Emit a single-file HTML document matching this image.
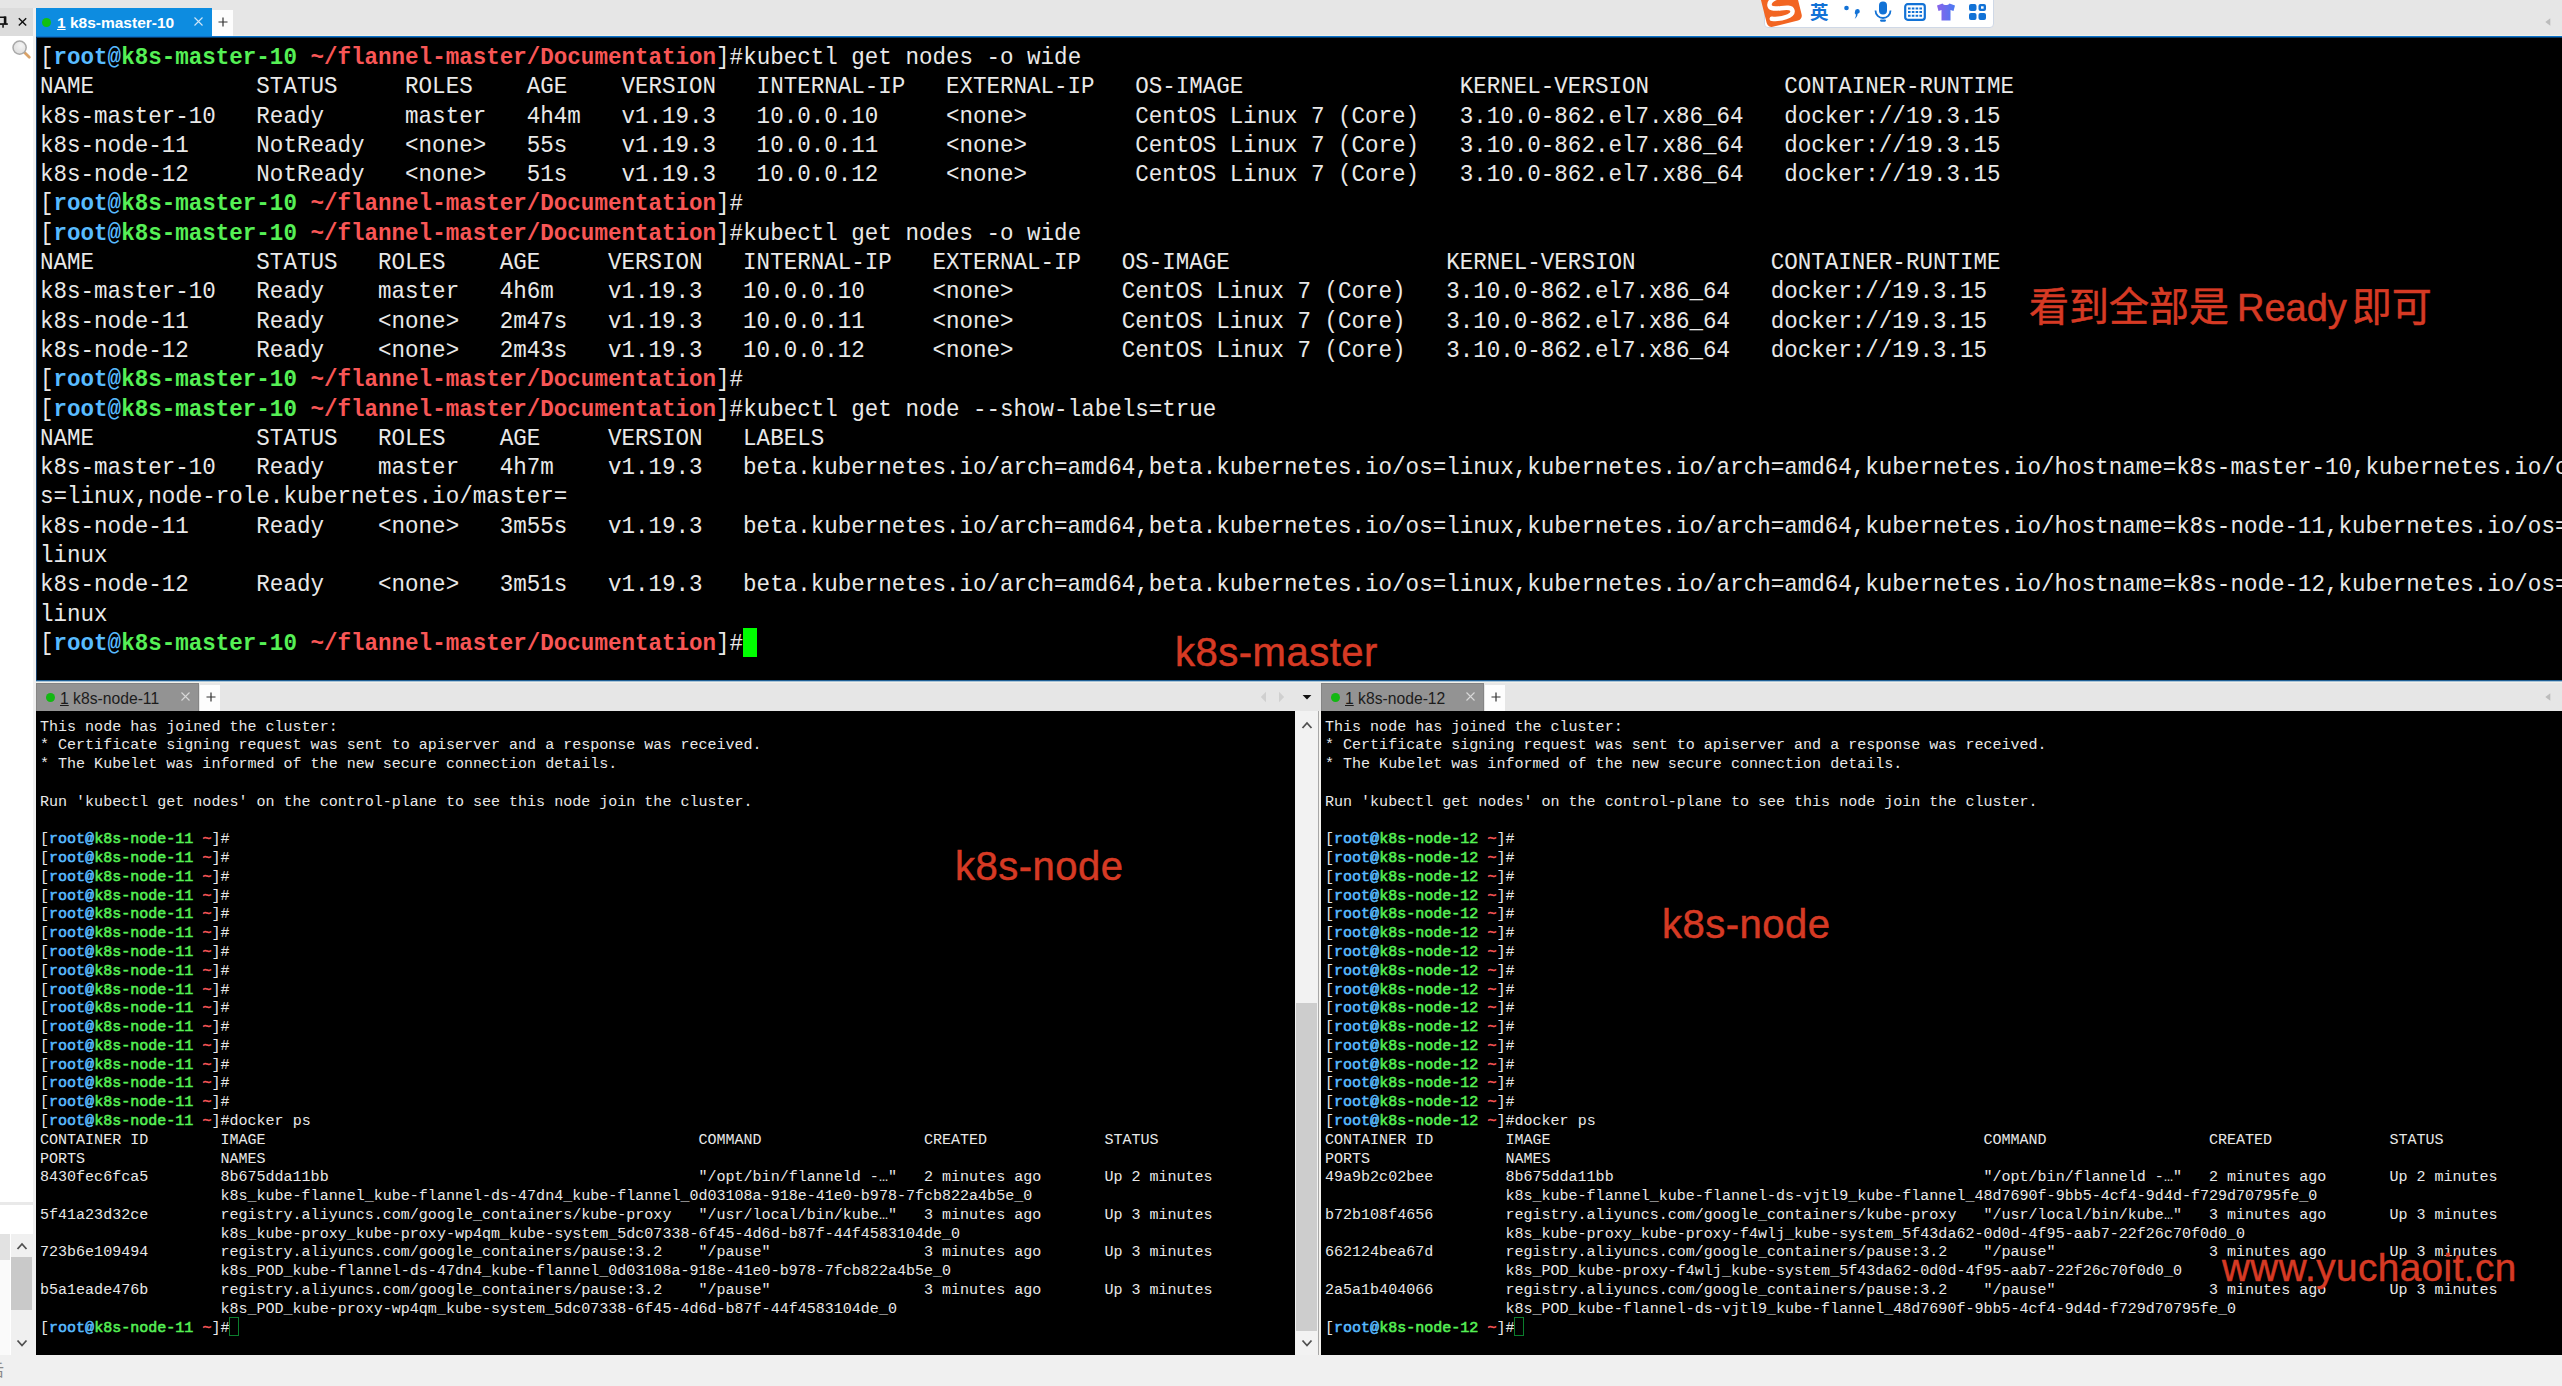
<!DOCTYPE html>
<html lang="zh"><head><meta charset="utf-8"><title>k8s terminals</title>
<style>
*{margin:0;padding:0;box-sizing:border-box}
html,body{width:2562px;height:1386px;overflow:hidden;background:#e6e6e6;font-family:"Liberation Sans",sans-serif}
#root{position:relative;width:2562px;height:1386px;overflow:hidden;background:#e6e6e6}
.abs{position:absolute}
.term{position:absolute;background:#000;overflow:hidden}
.ln{position:absolute;white-space:pre;color:#e9e9e9;font-family:"Liberation Mono",monospace}
.m{font-size:22.548px;line-height:30px;height:30px;transform:scaleY(1.065);transform-origin:0 50%}
.n{font-size:15.041px;line-height:20px;height:20px}
.w{color:#e9e9e9}
b{font-weight:bold}
.n b{font-weight:normal;-webkit-text-stroke:0.55px}
.b{color:#58bbff}
.g{color:#55f055}
.r{color:#f85656}
.cur{display:inline-block;width:13.531px;height:28px;background:#00ff00;vertical-align:top;margin-top:1px}
.hcur{display:inline-block;width:9.026px;height:18px;border:1px solid #0a8a0a;vertical-align:top;margin-top:1px}
.ann{position:absolute;color:#d63a24;-webkit-text-stroke:0.5px #d63a24;letter-spacing:0.5px;white-space:nowrap;font-family:"Liberation Sans","Noto Sans CJK SC",sans-serif;line-height:1}
.tabtxt{position:absolute;white-space:nowrap;font-family:"Liberation Sans",sans-serif}
</style></head>
<body><div id="root">
<div class="abs" style="left:0;top:0;width:2562px;height:36px;background:#e6e6e6"></div>
<div class="abs" style="left:0;top:8px;width:33px;height:28px;background:#dcdcdc"></div>
<div class="abs" style="left:0;top:36px;width:33px;height:1319px;background:#fff"></div>
<div class="abs" style="left:33px;top:8px;width:3px;height:1347px;background:#f0f0f0"></div>
<div class="abs" style="left:0;top:1202px;width:33px;height:3px;background:#e9e9e9"></div>
<div class="abs" style="left:0;top:1234px;width:10px;height:26px;background:#e2e2e2"></div>
<div class="abs" style="left:0;top:1260px;width:10px;height:95px;background:#fafafa"></div>
<div class="abs" style="left:11px;top:1234px;width:22px;height:121px;background:#f0f0f0"></div>
<div class="abs" style="left:11px;top:1257px;width:21px;height:53px;background:#c9c9c9"></div>
<svg class="abs" style="left:15px;top:1240px" width="14" height="12" viewBox="0 0 14 12"><path d="M2.5 9 L7 4 L11.5 9" fill="none" stroke="#505050" stroke-width="1.8"/></svg>
<svg class="abs" style="left:15px;top:1337px" width="14" height="12" viewBox="0 0 14 12"><path d="M2.5 3.5 L7 8.5 L11.5 3.5" fill="none" stroke="#505050" stroke-width="1.8"/></svg>
<svg class="abs" style="left:0;top:14px" width="10" height="16" viewBox="0 0 10 16"><path d="M-2 3.2 H5.2 V9.5" fill="none" stroke="#111" stroke-width="1.4"/><rect x="3.8" y="2.5" width="2.6" height="7.5" fill="#111"/><rect x="-2" y="9.2" width="9.8" height="1.7" fill="#111"/><rect x="2.3" y="10.5" width="1.5" height="3.2" fill="#111"/></svg>
<svg class="abs" style="left:18px;top:17px" width="10" height="10" viewBox="0 0 10 10"><path d="M0.8 1.2 L8.2 8.6 M8.2 1.2 L0.8 8.6" stroke="#111" stroke-width="1.4"/></svg>
<svg class="abs" style="left:10px;top:38px" width="22" height="22" viewBox="0 0 22 22"><defs><radialGradient id="mg" cx="0.6" cy="0.35" r="0.7"><stop offset="0" stop-color="#f4f4f4"/><stop offset="1" stop-color="#dcdcdc"/></radialGradient></defs><path d="M14.5 14.5 L19.3 19.3" stroke="#d9a268" stroke-width="2.8" stroke-linecap="round"/><circle cx="9.6" cy="9.6" r="6.6" fill="url(#mg)" stroke="#a9a9a9" stroke-width="1.5"/></svg>
<div class="abs" style="left:36px;top:8px;width:176px;height:28px;background:#0d8ce0"></div>
<div class="abs" style="left:42px;top:18px;width:9px;height:9px;border-radius:50%;background:#12c012"></div>
<div class="tabtxt" style="left:57px;top:13px;font-size:15.5px;font-weight:bold;color:#fff;line-height:20px"><u>1</u> k8s-master-10</div>
<svg class="abs" style="left:194px;top:17px" width="9" height="9" viewBox="0 0 9 9"><path d="M0.5 0.5 L8.5 8.5 M8.5 0.5 L0.5 8.5" stroke="#cfe6f8" stroke-width="1.1"/></svg>
<div class="abs" style="left:212px;top:10px;width:21px;height:26px;background:#fdfdfd"></div>
<svg class="abs" style="left:218px;top:17px" width="10" height="10" viewBox="0 0 10 10"><path d="M5 0.5 V9.5 M0.5 5 H9.5" stroke="#333" stroke-width="1.2"/></svg>
<div class="abs" style="left:233px;top:35px;width:2329px;height:1px;background:#f1efe6"></div>
<div class="abs" style="left:36px;top:36px;width:2526px;height:1px;background:#0b72cc"></div>
<div class="abs" style="left:36px;top:37px;width:2526px;height:1px;background:#063a66;z-index:1"></div>
<svg class="abs" style="left:2545px;top:18px" width="6" height="8" viewBox="0 0 6 8"><path d="M5.3 0.2 L0.3 4 L5.3 7.8 Z" fill="#bcbcbc"/></svg>
<div class="abs" style="left:1764px;top:-4px;width:230px;height:32px;background:#fff;border-radius:4px;border:1px solid #cfd8e6"></div>
<svg class="abs" style="left:1758px;top:-6px" width="48" height="38" viewBox="0 0 48 38"><g transform="rotate(-14 24 16)"><rect x="6" y="-6" width="36" height="36" rx="5" fill="#f26522"/><path d="M33 4 C24 1 13 3 13 9 C13 16 34 12 34 19 C34 25 20 25 12 22" fill="none" stroke="#fff" stroke-width="4.5" stroke-linecap="round"/></g></svg>
<div class="tabtxt" style="left:1810px;top:1px;font-size:18.5px;font-weight:bold;color:#1272d6;line-height:24px;font-family:'Liberation Sans','Noto Sans CJK SC',sans-serif">英</div>
<svg class="abs" style="left:1842px;top:2px" width="20" height="20" viewBox="0 0 20 20"><circle cx="4.5" cy="6" r="2.3" fill="#1272d6"/><path d="M13 9.5 a2.4 2.4 0 1 1 2.6 2.3 c0 2.5 -1.3 4 -3 5 c1 -1.4 1.5 -2.8 1.2 -4.2 a2.4 2.4 0 0 1 -0.8 -3.1z" fill="#1272d6"/></svg>
<svg class="abs" style="left:1873px;top:0px" width="20" height="24" viewBox="0 0 20 24"><rect x="6" y="1.5" width="8" height="13" rx="4" fill="#1272d6"/><path d="M2.5 10.5 a7.5 7.5 0 0 0 15 0" fill="none" stroke="#1272d6" stroke-width="1.8"/><rect x="7" y="19.5" width="6" height="2.2" rx="1.1" fill="#1272d6"/></svg>
<svg class="abs" style="left:1904px;top:3px" width="22" height="18" viewBox="0 0 22 18"><rect x="1.2" y="1.2" width="19.6" height="15.6" rx="2.5" fill="#fff" stroke="#1272d6" stroke-width="2.2"/><path d="M4 5.5 H18 M4 9 H18 M4 12.7 H18" stroke="#1272d6" stroke-width="2" stroke-dasharray="2.6 1.2"/></svg>
<svg class="abs" style="left:1935px;top:2px" width="22" height="20" viewBox="0 0 22 20"><defs><linearGradient id="tg" x1="0" x2="1"><stop offset="0" stop-color="#8a63ea"/><stop offset="1" stop-color="#4a7af2"/></linearGradient></defs><path d="M2 3.5 L7.5 1.5 C9 3.5 13 3.5 14.5 1.5 L20 3.5 L18.5 9 L15.5 8 V18.5 H6.5 V8 L3.5 9 Z" fill="url(#tg)"/></svg>
<svg class="abs" style="left:1968px;top:3px" width="20" height="18" viewBox="0 0 20 18"><rect x="1" y="1" width="7.5" height="7" rx="2" fill="#1272d6"/><rect x="10.5" y="1" width="7.5" height="7" rx="2" fill="#1272d6"/><rect x="13" y="3.3" width="2.6" height="2.4" fill="#fff"/><rect x="1" y="10" width="7.5" height="7" rx="2" fill="#1272d6"/><rect x="10.5" y="10" width="7.5" height="7" rx="2" fill="#1272d6"/></svg>
<div class="term" style="left:36px;top:37px;width:2526px;height:643px;border-left:1px solid #143c66"></div>
<div class="ln m" style="left:40px;top:42.90px"><span class="w">[</span><b class="b">root@</b><b class="g">k8s-master-10</b> <b class="r">~/flannel-master/Documentation</b><span class="w">]#</span>kubectl get nodes -o wide</div>
<div class="ln m" style="left:40px;top:72.20px">NAME            STATUS     ROLES    AGE    VERSION   INTERNAL-IP   EXTERNAL-IP   OS-IMAGE                KERNEL-VERSION          CONTAINER-RUNTIME</div>
<div class="ln m" style="left:40px;top:101.50px">k8s-master-10   Ready      master   4h4m   v1.19.3   10.0.0.10     &lt;none&gt;        CentOS Linux 7 (Core)   3.10.0-862.el7.x86_64   docker://19.3.15</div>
<div class="ln m" style="left:40px;top:130.80px">k8s-node-11     NotReady   &lt;none&gt;   55s    v1.19.3   10.0.0.11     &lt;none&gt;        CentOS Linux 7 (Core)   3.10.0-862.el7.x86_64   docker://19.3.15</div>
<div class="ln m" style="left:40px;top:160.10px">k8s-node-12     NotReady   &lt;none&gt;   51s    v1.19.3   10.0.0.12     &lt;none&gt;        CentOS Linux 7 (Core)   3.10.0-862.el7.x86_64   docker://19.3.15</div>
<div class="ln m" style="left:40px;top:189.40px"><span class="w">[</span><b class="b">root@</b><b class="g">k8s-master-10</b> <b class="r">~/flannel-master/Documentation</b><span class="w">]#</span></div>
<div class="ln m" style="left:40px;top:218.70px"><span class="w">[</span><b class="b">root@</b><b class="g">k8s-master-10</b> <b class="r">~/flannel-master/Documentation</b><span class="w">]#</span>kubectl get nodes -o wide</div>
<div class="ln m" style="left:40px;top:248.00px">NAME            STATUS   ROLES    AGE     VERSION   INTERNAL-IP   EXTERNAL-IP   OS-IMAGE                KERNEL-VERSION          CONTAINER-RUNTIME</div>
<div class="ln m" style="left:40px;top:277.30px">k8s-master-10   Ready    master   4h6m    v1.19.3   10.0.0.10     &lt;none&gt;        CentOS Linux 7 (Core)   3.10.0-862.el7.x86_64   docker://19.3.15</div>
<div class="ln m" style="left:40px;top:306.60px">k8s-node-11     Ready    &lt;none&gt;   2m47s   v1.19.3   10.0.0.11     &lt;none&gt;        CentOS Linux 7 (Core)   3.10.0-862.el7.x86_64   docker://19.3.15</div>
<div class="ln m" style="left:40px;top:335.90px">k8s-node-12     Ready    &lt;none&gt;   2m43s   v1.19.3   10.0.0.12     &lt;none&gt;        CentOS Linux 7 (Core)   3.10.0-862.el7.x86_64   docker://19.3.15</div>
<div class="ln m" style="left:40px;top:365.20px"><span class="w">[</span><b class="b">root@</b><b class="g">k8s-master-10</b> <b class="r">~/flannel-master/Documentation</b><span class="w">]#</span></div>
<div class="ln m" style="left:40px;top:394.50px"><span class="w">[</span><b class="b">root@</b><b class="g">k8s-master-10</b> <b class="r">~/flannel-master/Documentation</b><span class="w">]#</span>kubectl get node --show-labels=true</div>
<div class="ln m" style="left:40px;top:423.80px">NAME            STATUS   ROLES    AGE     VERSION   LABELS</div>
<div class="ln m" style="left:40px;top:453.10px">k8s-master-10   Ready    master   4h7m    v1.19.3   beta.kubernetes.io/arch=amd64,beta.kubernetes.io/os=linux,kubernetes.io/arch=amd64,kubernetes.io/hostname=k8s-master-10,kubernetes.io/o</div>
<div class="ln m" style="left:40px;top:482.40px">s=linux,node-role.kubernetes.io/master=</div>
<div class="ln m" style="left:40px;top:511.70px">k8s-node-11     Ready    &lt;none&gt;   3m55s   v1.19.3   beta.kubernetes.io/arch=amd64,beta.kubernetes.io/os=linux,kubernetes.io/arch=amd64,kubernetes.io/hostname=k8s-node-11,kubernetes.io/os=</div>
<div class="ln m" style="left:40px;top:541.00px">linux</div>
<div class="ln m" style="left:40px;top:570.30px">k8s-node-12     Ready    &lt;none&gt;   3m51s   v1.19.3   beta.kubernetes.io/arch=amd64,beta.kubernetes.io/os=linux,kubernetes.io/arch=amd64,kubernetes.io/hostname=k8s-node-12,kubernetes.io/os=</div>
<div class="ln m" style="left:40px;top:599.60px">linux</div>
<div class="ln m" style="left:40px;top:628.90px"><span class="w">[</span><b class="b">root@</b><b class="g">k8s-master-10</b> <b class="r">~/flannel-master/Documentation</b><span class="w">]#</span></div>
<div class="abs" style="left:36px;top:680px;width:2526px;height:1px;background:#1f5f94"></div>
<div class="abs" style="left:36px;top:681px;width:2526px;height:30px;background:#e6e6e6"></div>
<div class="abs" style="left:36px;top:681px;width:2526px;height:1px;background:#a9c4d8"></div>
<div class="abs" style="left:36px;top:682px;width:2526px;height:1px;background:#f3f1ea"></div>
<div class="abs" style="left:36px;top:683px;width:163px;height:28px;background:#939393;border:1px solid #858585;border-bottom:none"></div>
<div class="abs" style="left:46px;top:693.2px;width:9px;height:9px;border-radius:50%;background:#12b812"></div>
<div class="tabtxt" style="left:60px;top:689px;font-size:15.7px;color:#1c1c1c;line-height:20px"><u>1</u> k8s-node-11</div>
<svg class="abs" style="left:181px;top:692px" width="9" height="9" viewBox="0 0 9 9"><path d="M0.5 0.5 L8.5 8.5 M8.5 0.5 L0.5 8.5" stroke="#d8d8d8" stroke-width="1.1"/></svg>
<div class="abs" style="left:200px;top:685px;width:20px;height:26px;background:#fdfdfd"></div>
<svg class="abs" style="left:206px;top:692px" width="10" height="10" viewBox="0 0 10 10"><path d="M5 0.5 V9.5 M0.5 5 H9.5" stroke="#333" stroke-width="1.2"/></svg>
<div class="abs" style="left:1321px;top:683px;width:163px;height:28px;background:#939393;border:1px solid #858585;border-bottom:none"></div>
<div class="abs" style="left:1331px;top:693.2px;width:9px;height:9px;border-radius:50%;background:#12b812"></div>
<div class="tabtxt" style="left:1345px;top:689px;font-size:15.7px;color:#1c1c1c;line-height:20px"><u>1</u> k8s-node-12</div>
<svg class="abs" style="left:1466px;top:692px" width="9" height="9" viewBox="0 0 9 9"><path d="M0.5 0.5 L8.5 8.5 M8.5 0.5 L0.5 8.5" stroke="#d8d8d8" stroke-width="1.1"/></svg>
<div class="abs" style="left:1485px;top:685px;width:20px;height:26px;background:#fdfdfd"></div>
<svg class="abs" style="left:1491px;top:692px" width="10" height="10" viewBox="0 0 10 10"><path d="M5 0.5 V9.5 M0.5 5 H9.5" stroke="#333" stroke-width="1.2"/></svg>
<svg class="abs" style="left:1260px;top:691px" width="7" height="12" viewBox="0 0 7 12"><path d="M6 0.8 L0.8 6 L6 11.2 Z" fill="#d0d0d0"/></svg>
<svg class="abs" style="left:1278px;top:691px" width="7" height="12" viewBox="0 0 7 12"><path d="M1 0.8 L6.2 6 L1 11.2 Z" fill="#d0d0d0"/></svg>
<svg class="abs" style="left:1302px;top:694px" width="10" height="6" viewBox="0 0 10 6"><path d="M0.6 1 H9.4 L5 5.4 Z" fill="#111"/></svg>
<svg class="abs" style="left:2545px;top:693px" width="6" height="8" viewBox="0 0 6 8"><path d="M5.3 0.2 L0.3 4 L5.3 7.8 Z" fill="#bcbcbc"/></svg>
<div class="term" style="left:36px;top:711px;width:1259px;height:644px"></div>
<div class="term" style="left:1321px;top:711px;width:1241px;height:644px"></div>
<div class="abs" style="left:1295px;top:711px;width:23px;height:644px;background:#f2f2f2"></div>
<div class="abs" style="left:1318px;top:711px;width:3px;height:644px;background:#f4f2ee;border-left:1px solid #a8a8a8"></div>
<div class="abs" style="left:1296px;top:1003px;width:21px;height:328px;background:#cdcdcd"></div>
<svg class="abs" style="left:1300px;top:719px" width="14" height="12" viewBox="0 0 14 12"><path d="M2.5 9 L7 4 L11.5 9" fill="none" stroke="#505050" stroke-width="1.8"/></svg>
<svg class="abs" style="left:1300px;top:1337px" width="14" height="12" viewBox="0 0 14 12"><path d="M2.5 3.5 L7 8.5 L11.5 3.5" fill="none" stroke="#505050" stroke-width="1.8"/></svg>
<div class="ln n" style="left:40px;top:716.60px">This node has joined the cluster:</div>
<div class="ln n" style="left:40px;top:735.38px">* Certificate signing request was sent to apiserver and a response was received.</div>
<div class="ln n" style="left:40px;top:754.16px">* The Kubelet was informed of the new secure connection details.</div>
<div class="ln n" style="left:40px;top:791.72px">Run &#x27;kubectl get nodes&#x27; on the control-plane to see this node join the cluster.</div>
<div class="ln n" style="left:40px;top:829.28px"><span class="w">[</span><b class="b">root@</b><b class="g">k8s-node-11</b> <b class="r">~</b><span class="w">]#</span></div>
<div class="ln n" style="left:40px;top:848.06px"><span class="w">[</span><b class="b">root@</b><b class="g">k8s-node-11</b> <b class="r">~</b><span class="w">]#</span></div>
<div class="ln n" style="left:40px;top:866.84px"><span class="w">[</span><b class="b">root@</b><b class="g">k8s-node-11</b> <b class="r">~</b><span class="w">]#</span></div>
<div class="ln n" style="left:40px;top:885.62px"><span class="w">[</span><b class="b">root@</b><b class="g">k8s-node-11</b> <b class="r">~</b><span class="w">]#</span></div>
<div class="ln n" style="left:40px;top:904.40px"><span class="w">[</span><b class="b">root@</b><b class="g">k8s-node-11</b> <b class="r">~</b><span class="w">]#</span></div>
<div class="ln n" style="left:40px;top:923.18px"><span class="w">[</span><b class="b">root@</b><b class="g">k8s-node-11</b> <b class="r">~</b><span class="w">]#</span></div>
<div class="ln n" style="left:40px;top:941.96px"><span class="w">[</span><b class="b">root@</b><b class="g">k8s-node-11</b> <b class="r">~</b><span class="w">]#</span></div>
<div class="ln n" style="left:40px;top:960.74px"><span class="w">[</span><b class="b">root@</b><b class="g">k8s-node-11</b> <b class="r">~</b><span class="w">]#</span></div>
<div class="ln n" style="left:40px;top:979.52px"><span class="w">[</span><b class="b">root@</b><b class="g">k8s-node-11</b> <b class="r">~</b><span class="w">]#</span></div>
<div class="ln n" style="left:40px;top:998.30px"><span class="w">[</span><b class="b">root@</b><b class="g">k8s-node-11</b> <b class="r">~</b><span class="w">]#</span></div>
<div class="ln n" style="left:40px;top:1017.08px"><span class="w">[</span><b class="b">root@</b><b class="g">k8s-node-11</b> <b class="r">~</b><span class="w">]#</span></div>
<div class="ln n" style="left:40px;top:1035.86px"><span class="w">[</span><b class="b">root@</b><b class="g">k8s-node-11</b> <b class="r">~</b><span class="w">]#</span></div>
<div class="ln n" style="left:40px;top:1054.64px"><span class="w">[</span><b class="b">root@</b><b class="g">k8s-node-11</b> <b class="r">~</b><span class="w">]#</span></div>
<div class="ln n" style="left:40px;top:1073.42px"><span class="w">[</span><b class="b">root@</b><b class="g">k8s-node-11</b> <b class="r">~</b><span class="w">]#</span></div>
<div class="ln n" style="left:40px;top:1092.20px"><span class="w">[</span><b class="b">root@</b><b class="g">k8s-node-11</b> <b class="r">~</b><span class="w">]#</span></div>
<div class="ln n" style="left:40px;top:1110.98px"><span class="w">[</span><b class="b">root@</b><b class="g">k8s-node-11</b> <b class="r">~</b><span class="w">]#</span>docker ps</div>
<div class="ln n" style="left:40px;top:1129.76px">CONTAINER ID        IMAGE                                                COMMAND                  CREATED             STATUS</div>
<div class="ln n" style="left:40px;top:1148.54px">PORTS               NAMES</div>
<div class="ln n" style="left:40px;top:1167.32px">8430fec6fca5        8b675dda11bb                                         &quot;/opt/bin/flanneld -…&quot;   2 minutes ago       Up 2 minutes</div>
<div class="ln n" style="left:40px;top:1186.10px">                    k8s_kube-flannel_kube-flannel-ds-47dn4_kube-flannel_0d03108a-918e-41e0-b978-7fcb822a4b5e_0</div>
<div class="ln n" style="left:40px;top:1204.88px">5f41a23d32ce        registry.aliyuncs.com/google_containers/kube-proxy   &quot;/usr/local/bin/kube…&quot;   3 minutes ago       Up 3 minutes</div>
<div class="ln n" style="left:40px;top:1223.66px">                    k8s_kube-proxy_kube-proxy-wp4qm_kube-system_5dc07338-6f45-4d6d-b87f-44f4583104de_0</div>
<div class="ln n" style="left:40px;top:1242.44px">723b6e109494        registry.aliyuncs.com/google_containers/pause:3.2    &quot;/pause&quot;                 3 minutes ago       Up 3 minutes</div>
<div class="ln n" style="left:40px;top:1261.22px">                    k8s_POD_kube-flannel-ds-47dn4_kube-flannel_0d03108a-918e-41e0-b978-7fcb822a4b5e_0</div>
<div class="ln n" style="left:40px;top:1280.00px">b5a1eade476b        registry.aliyuncs.com/google_containers/pause:3.2    &quot;/pause&quot;                 3 minutes ago       Up 3 minutes</div>
<div class="ln n" style="left:40px;top:1298.78px">                    k8s_POD_kube-proxy-wp4qm_kube-system_5dc07338-6f45-4d6d-b87f-44f4583104de_0</div>
<div class="ln n" style="left:40px;top:1317.56px"><span class="w">[</span><b class="b">root@</b><b class="g">k8s-node-11</b> <b class="r">~</b><span class="w">]#</span></div>
<div class="ln n" style="left:1325px;top:716.60px">This node has joined the cluster:</div>
<div class="ln n" style="left:1325px;top:735.38px">* Certificate signing request was sent to apiserver and a response was received.</div>
<div class="ln n" style="left:1325px;top:754.16px">* The Kubelet was informed of the new secure connection details.</div>
<div class="ln n" style="left:1325px;top:791.72px">Run &#x27;kubectl get nodes&#x27; on the control-plane to see this node join the cluster.</div>
<div class="ln n" style="left:1325px;top:829.28px"><span class="w">[</span><b class="b">root@</b><b class="g">k8s-node-12</b> <b class="r">~</b><span class="w">]#</span></div>
<div class="ln n" style="left:1325px;top:848.06px"><span class="w">[</span><b class="b">root@</b><b class="g">k8s-node-12</b> <b class="r">~</b><span class="w">]#</span></div>
<div class="ln n" style="left:1325px;top:866.84px"><span class="w">[</span><b class="b">root@</b><b class="g">k8s-node-12</b> <b class="r">~</b><span class="w">]#</span></div>
<div class="ln n" style="left:1325px;top:885.62px"><span class="w">[</span><b class="b">root@</b><b class="g">k8s-node-12</b> <b class="r">~</b><span class="w">]#</span></div>
<div class="ln n" style="left:1325px;top:904.40px"><span class="w">[</span><b class="b">root@</b><b class="g">k8s-node-12</b> <b class="r">~</b><span class="w">]#</span></div>
<div class="ln n" style="left:1325px;top:923.18px"><span class="w">[</span><b class="b">root@</b><b class="g">k8s-node-12</b> <b class="r">~</b><span class="w">]#</span></div>
<div class="ln n" style="left:1325px;top:941.96px"><span class="w">[</span><b class="b">root@</b><b class="g">k8s-node-12</b> <b class="r">~</b><span class="w">]#</span></div>
<div class="ln n" style="left:1325px;top:960.74px"><span class="w">[</span><b class="b">root@</b><b class="g">k8s-node-12</b> <b class="r">~</b><span class="w">]#</span></div>
<div class="ln n" style="left:1325px;top:979.52px"><span class="w">[</span><b class="b">root@</b><b class="g">k8s-node-12</b> <b class="r">~</b><span class="w">]#</span></div>
<div class="ln n" style="left:1325px;top:998.30px"><span class="w">[</span><b class="b">root@</b><b class="g">k8s-node-12</b> <b class="r">~</b><span class="w">]#</span></div>
<div class="ln n" style="left:1325px;top:1017.08px"><span class="w">[</span><b class="b">root@</b><b class="g">k8s-node-12</b> <b class="r">~</b><span class="w">]#</span></div>
<div class="ln n" style="left:1325px;top:1035.86px"><span class="w">[</span><b class="b">root@</b><b class="g">k8s-node-12</b> <b class="r">~</b><span class="w">]#</span></div>
<div class="ln n" style="left:1325px;top:1054.64px"><span class="w">[</span><b class="b">root@</b><b class="g">k8s-node-12</b> <b class="r">~</b><span class="w">]#</span></div>
<div class="ln n" style="left:1325px;top:1073.42px"><span class="w">[</span><b class="b">root@</b><b class="g">k8s-node-12</b> <b class="r">~</b><span class="w">]#</span></div>
<div class="ln n" style="left:1325px;top:1092.20px"><span class="w">[</span><b class="b">root@</b><b class="g">k8s-node-12</b> <b class="r">~</b><span class="w">]#</span></div>
<div class="ln n" style="left:1325px;top:1110.98px"><span class="w">[</span><b class="b">root@</b><b class="g">k8s-node-12</b> <b class="r">~</b><span class="w">]#</span>docker ps</div>
<div class="ln n" style="left:1325px;top:1129.76px">CONTAINER ID        IMAGE                                                COMMAND                  CREATED             STATUS</div>
<div class="ln n" style="left:1325px;top:1148.54px">PORTS               NAMES</div>
<div class="ln n" style="left:1325px;top:1167.32px">49a9b2c02bee        8b675dda11bb                                         &quot;/opt/bin/flanneld -…&quot;   2 minutes ago       Up 2 minutes</div>
<div class="ln n" style="left:1325px;top:1186.10px">                    k8s_kube-flannel_kube-flannel-ds-vjtl9_kube-flannel_48d7690f-9bb5-4cf4-9d4d-f729d70795fe_0</div>
<div class="ln n" style="left:1325px;top:1204.88px">b72b108f4656        registry.aliyuncs.com/google_containers/kube-proxy   &quot;/usr/local/bin/kube…&quot;   3 minutes ago       Up 3 minutes</div>
<div class="ln n" style="left:1325px;top:1223.66px">                    k8s_kube-proxy_kube-proxy-f4wlj_kube-system_5f43da62-0d0d-4f95-aab7-22f26c70f0d0_0</div>
<div class="ln n" style="left:1325px;top:1242.44px">662124bea67d        registry.aliyuncs.com/google_containers/pause:3.2    &quot;/pause&quot;                 3 minutes ago       Up 3 minutes</div>
<div class="ln n" style="left:1325px;top:1261.22px">                    k8s_POD_kube-proxy-f4wlj_kube-system_5f43da62-0d0d-4f95-aab7-22f26c70f0d0_0</div>
<div class="ln n" style="left:1325px;top:1280.00px">2a5a1b404066        registry.aliyuncs.com/google_containers/pause:3.2    &quot;/pause&quot;                 3 minutes ago       Up 3 minutes</div>
<div class="ln n" style="left:1325px;top:1298.78px">                    k8s_POD_kube-flannel-ds-vjtl9_kube-flannel_48d7690f-9bb5-4cf4-9d4d-f729d70795fe_0</div>
<div class="ln n" style="left:1325px;top:1317.56px"><span class="w">[</span><b class="b">root@</b><b class="g">k8s-node-12</b> <b class="r">~</b><span class="w">]#</span></div>
<div class="abs" style="left:743.4px;top:627.5px;width:13.4px;height:29px;background:#00ff00"></div>
<div class="abs" style="left:229px;top:1317px;width:10px;height:19px;border:1px solid #0b7d2c"></div>
<div class="abs" style="left:1514px;top:1317px;width:10px;height:19px;border:1px solid #0b7d2c"></div>
<div class="abs" style="left:0;top:1355px;width:2562px;height:31px;background:#f0f0f0"></div>
<div class="tabtxt" style="left:-12px;top:1361px;font-size:16px;color:#8a8a8a;line-height:20px;font-family:'Liberation Sans','Noto Sans CJK SC',sans-serif">后</div>
<div class="ann" style="left:2029px;top:286.5px;font-size:40px;letter-spacing:0">看到全部是<span style="margin:0 5px 0 8px;font-size:38px">Ready</span>即可</div>
<div class="ann" style="left:1175px;top:632px;font-size:40px">k8s-master</div>
<div class="ann" style="left:955px;top:846px;font-size:40px">k8s-node</div>
<div class="ann" style="left:1662px;top:904px;font-size:40px">k8s-node</div>
<div class="ann" style="left:2222px;top:1249px;font-size:38.6px">www.yuchaoit.cn</div>
</div></body></html>
